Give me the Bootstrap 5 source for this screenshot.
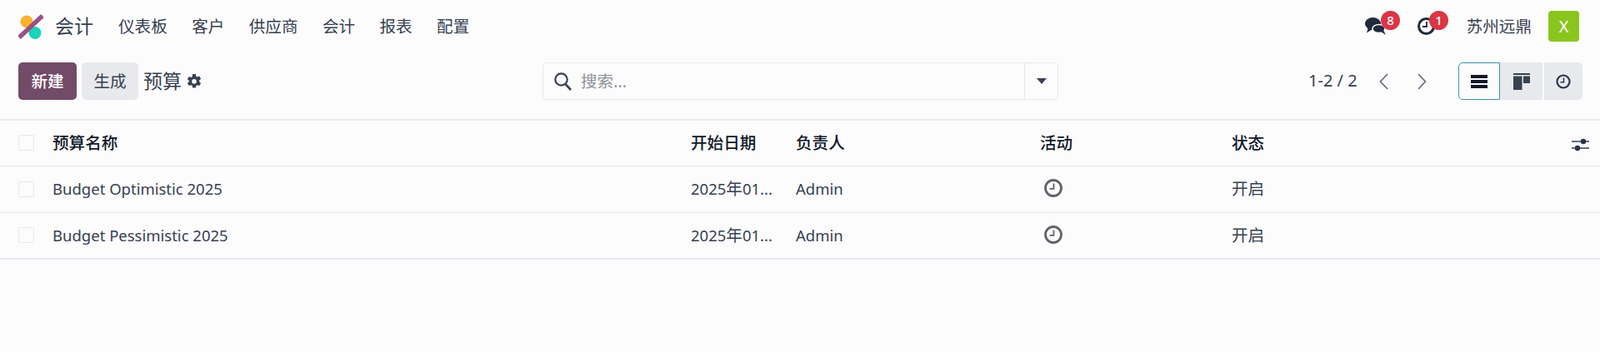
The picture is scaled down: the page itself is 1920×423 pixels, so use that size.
<!DOCTYPE html>
<html lang="zh-CN">
<head>
    <meta charset="UTF-8">
    <meta name="viewport" content="width=device-width, initial-scale=1.0">
    <title>预算</title>
    <link rel="stylesheet" href="https://cdn.jsdelivr.net/npm/bootstrap@5.3.0/dist/css/bootstrap.min.css">
    <style>
        html, body { height: 100%; }
        body { background: #fcfcfd; color: #374151; font-family: "Noto Sans", "Noto Sans CJK SC", sans-serif; font-size: 19.6px; overflow: hidden; }
        .latin-text { font-size: 18.500px; }
        .cjk-text { font-size: 19.6px; }
        .top-bar { height: 63px; padding: 0 25px 0 22px; }
        .app-name { font-size: 23px; color: #374151; margin: 0 30px 0 14px; }
        .menu-wrap { gap: 29.4px; }
        .menu-link { color: #374151; text-decoration: none; }
        .sys-icon { position: relative; height: 21px; }
        .sys-chat { width: 25px; margin-right: 38px; }
        .sys-clock { width: 21px; margin-right: 38px; }
        .sys-icon svg { display: block; }
        .sys-badge { position: absolute; top: -8.500px; width: 23px; height: 23px; border-radius: 50%; background: #dc3545; color: #fff; font-size: 15px; font-weight: 500; line-height: 23px; text-align: center; }
        .sys-chat .sys-badge { left: 19.500px; }
        .sys-clock .sys-badge { left: 14.500px; }
        .user-name { color: #374151; margin-right: 20px; }
        .user-tile { width: 37px; height: 37px; border-radius: 4px; background: #8ac51e; color: #fff; line-height: 37px; text-align: center; font-size: 20px; }
        .tool-bar { height: 80px; padding: 12px 22px 23px; position: relative; }
        .act-btn { height: 45px; border: 0; border-radius: 5px; font-size: 19.6px; padding: 0; }
        .act-new { width: 70px; background: #714b67; color: #fff; font-weight: 500; }
        .act-make { width: 68px; background: #e7e9ed; color: #374151; margin-left: 6px; }
        .page-name { font-size: 23px; margin-left: 6px; margin-right: 1px; color: #374151; }
        .search-box { position: absolute; left: 651px; top: 12px; width: 619px; height: 45px; border: 1px solid #e7e9ed; border-radius: 5px; }
        .search-mag { margin-left: 13px; }
        .search-box input { border: 0; background: transparent; outline: 0; font-size: 19.6px; padding: 0 0 0 11px; color: #374151; min-width: 0; }
        .search-box input::placeholder { color: #8f9399; opacity: 1; }
        .search-drop { width: 40px; height: 100%; border-left: 1px solid #e7e9ed; }
        .pager-text { position: absolute; left: 1570px; top: 20px; font-size: 20px; line-height: 28px; color: #374151; }
        .pager-arrows { position: absolute; left: 1653px; top: 25px; gap: 29px; }
        .view-btns { position: absolute; left: 1750px; top: 12px; height: 45px; }
        .view-btn { height: 45px; background: #e7e9ed; }
        .view-list { width: 50px; background: #fcfcfd; border: 1px solid #3f97a3; border-radius: 5px 0 0 5px; }
        .view-kanban { width: 51px; }
        .view-activity { width: 46px; margin-left: 2px; border-radius: 0 5px 5px 0; }
        .list-table { table-layout: fixed; width: 100%; margin: 0; border-top: 2px solid #e7e9ed; border-bottom: 2px solid #e7e9ed; --bs-table-bg: transparent; color: #374151; }
        .list-table th, .list-table td { height: 56px; padding: 0; vertical-align: middle; border-bottom: 1px solid #e7e9ed; white-space: nowrap; overflow: hidden; color: #374151; }
        .list-table th { height: 55px; color: #111827; font-weight: 500; }
        .list-table tbody tr:last-child td { border-bottom: 0; }
        .check-cell { padding-left: 22px !important; }
        .box-mark { display: block; width: 19px; height: 19px; border: 1px solid #e7e9ed; background: #fcfcfd; border-radius: 1px; }
        .activity-cell { padding-left: 4px !important; }
        .activity-cell svg { display: block; margin-top: -2px; }
    </style>
</head>
<body>

<!-- top menu -->
<nav class="top-bar d-flex align-items-center">
    <svg width="30" height="30" viewBox="0 0 30 30">
        <circle cx="10" cy="9" r="7.500" fill="#fbb130"/>
        <circle cx="20" cy="22.500" r="7.500" fill="#1ad3bb"/>
        <path d="M1 28 L29 2" stroke="#985184" stroke-width="5.500"/>
    </svg>
    <span class="app-name">会计</span>
    <div class="menu-wrap d-flex">
        <a class="menu-link" href="#">仪表板</a>
        <a class="menu-link" href="#">客户</a>
        <a class="menu-link" href="#">供应商</a>
        <a class="menu-link" href="#">会计</a>
        <a class="menu-link" href="#">报表</a>
        <a class="menu-link" href="#">配置</a>
    </div>
    <div class="ms-auto d-flex align-items-center">
        <div class="sys-icon sys-chat">
            <svg width="25" height="21" viewBox="0 0 25 21">
                <ellipse cx="9.500" cy="7.500" rx="9.500" ry="7.500" fill="#1f2a3d"/>
                <path d="M4 12L2 18.500 9 14z" fill="#1f2a3d"/>
                <ellipse cx="16.500" cy="13.500" rx="7.500" ry="5" fill="#1f2a3d" stroke="#fcfcfd" stroke-width="1.500"/>
                <path d="M19 17L25 21 22 15z" fill="#1f2a3d"/>
            </svg>
            <span class="sys-badge">8</span>
        </div>
        <div class="sys-icon sys-clock">
            <svg width="21" height="21" viewBox="0 0 21 21">
                <circle cx="10.500" cy="10.500" r="9" fill="none" stroke="#1f2a3d" stroke-width="3"/>
                <path d="M11 5V11H6" fill="none" stroke="#1f2a3d" stroke-width="1.800"/>
            </svg>
            <span class="sys-badge">1</span>
        </div>
        <span class="user-name">苏州远鼎</span>
        <span class="user-tile">X</span>
    </div>
</nav>

<!-- toolbar -->
<div class="tool-bar d-flex align-items-start">
    <button class="act-btn act-new">新建</button>
    <button class="act-btn act-make">生成</button>
    <div class="d-flex align-items-center" style="height:45px">
        <span class="page-name">预算</span>
        <svg class="ms-1" width="20" height="20" viewBox="1 0 16 18">
            <path d="M7.300 1h3.400l.4 2.300 1.300.7 2.200-.8 1.700 2.900-1.800 1.500v1.600l1.800 1.500-1.700 2.900-2.200-.8-1.300.7-.4 2.300H7.300l-.4-2.300-1.300-.7-2.200.8-1.700-2.900 1.800-1.500V8.100L1.700 6.600l1.700-2.900 2.200.8 1.300-.7z" fill="#374151"/>
            <circle cx="9" cy="8.900" r="2.500" fill="#fcfcfd"/>
        </svg>
    </div>

    <div class="search-box d-flex align-items-center">
        <svg class="search-mag flex-shrink-0" width="21" height="22" viewBox="0 0 21 22">
            <circle cx="8.500" cy="8.500" r="7.200" fill="none" stroke="#374151" stroke-width="2.200"/>
            <path d="M13.500 14L20 21" stroke="#374151" stroke-width="2.600"/>
        </svg>
        <input class="flex-grow-1" type="text" placeholder="搜索...">
        <div class="search-drop d-flex align-items-center justify-content-center">
            <svg width="12" height="7" viewBox="0 0 12 7"><path d="M0 0H12L6 7z" fill="#374151"/></svg>
        </div>
    </div>

    <span class="pager-text">1-2 / 2</span>
    <div class="pager-arrows d-flex">
        <svg width="16" height="20" viewBox="0 0 16 20"><path d="M12 1L3.500 10 12 19" fill="none" stroke="#6b7280" stroke-width="1.800"/></svg>
        <svg width="16" height="20" viewBox="0 0 16 20"><path d="M4 1L12.500 10 4 19" fill="none" stroke="#6b7280" stroke-width="1.800"/></svg>
    </div>

    <div class="view-btns d-flex">
        <div class="view-btn view-list d-flex align-items-center justify-content-center">
            <svg width="20" height="16" viewBox="0 0 20 16"><path d="M0 0H20V4H0zM0 6H20V10H0zM0 12H20V16H0z" fill="#111827"/></svg>
        </div>
        <div class="view-btn view-kanban d-flex align-items-center justify-content-center">
            <svg width="20" height="20" viewBox="0 0 20 20"><path d="M0 0H20V2H0zM0 3.500H10.500V20H0zM12 3.500H20V12H12z" fill="#374151"/></svg>
        </div>
        <div class="view-btn view-activity d-flex align-items-center justify-content-center">
            <svg width="18" height="18" viewBox="0 0 18 18">
                <circle cx="9" cy="9" r="7.500" fill="none" stroke="#2b3448" stroke-width="2.200"/>
                <path d="M9.500 4.500V9.800H5.500" fill="none" stroke="#2b3448" stroke-width="1.500"/>
            </svg>
        </div>
    </div>
</div>

<!-- list -->
<table class="table list-table">
    <colgroup>
        <col style="width:63px">
        <col style="width:766px">
        <col style="width:126px">
        <col style="width:293px">
        <col style="width:230px">
        <col>
        <col style="width:34px">
    </colgroup>
    <thead>
        <tr>
            <th class="check-cell"><span class="box-mark"></span></th>
            <th>预算名称</th>
            <th>开始日期</th>
            <th>负责人</th>
            <th>活动</th>
            <th>状态</th>
            <th>
                <svg width="21" height="18" viewBox="0 0 21 18">
                    <path d="M0 5H21M0 13H21" stroke="#374151" stroke-width="1.300"/>
                    <circle cx="14" cy="5" r="3.200" fill="#2b3448"/>
                    <circle cx="7" cy="13" r="3.200" fill="#2b3448"/>
                </svg>
            </th>
        </tr>
    </thead>
    <tbody id="budget_rows"></tbody>
</table>

<script>
    const budgets = [
        { name: "Budget Optimistic 2025", date: "2025<span class=\"cjk-text\">年</span>01...", owner: "Admin", state: "开启" },
        { name: "Budget Pessimistic 2025", date: "2025<span class=\"cjk-text\">年</span>01...", owner: "Admin", state: "开启" }
    ];

    const clockIcon = `<svg width="24" height="24" viewBox="0 0 24 24">
        <circle cx="12" cy="12" r="9.500" fill="none" stroke="#5f636a" stroke-width="2.800"/>
        <path d="M12.500 6.500V12.800H7.500" fill="none" stroke="#5f636a" stroke-width="1.800"/>
    </svg>`;

    document.getElementById('budget_rows').innerHTML = budgets.map(b =>
        `<tr>
            <td class="check-cell"><span class="box-mark"></span></td>
            <td class="latin-text">${b.name}</td>
            <td class="latin-text">${b.date}</td>
            <td class="latin-text">${b.owner}</td>
            <td class="activity-cell">${clockIcon}</td>
            <td>${b.state}</td>
            <td></td>
        </tr>`
    ).join('');
</script>

<script src="https://cdn.jsdelivr.net/npm/bootstrap@5.3.0/dist/js/bootstrap.bundle.min.js"></script>
</body>
</html>
